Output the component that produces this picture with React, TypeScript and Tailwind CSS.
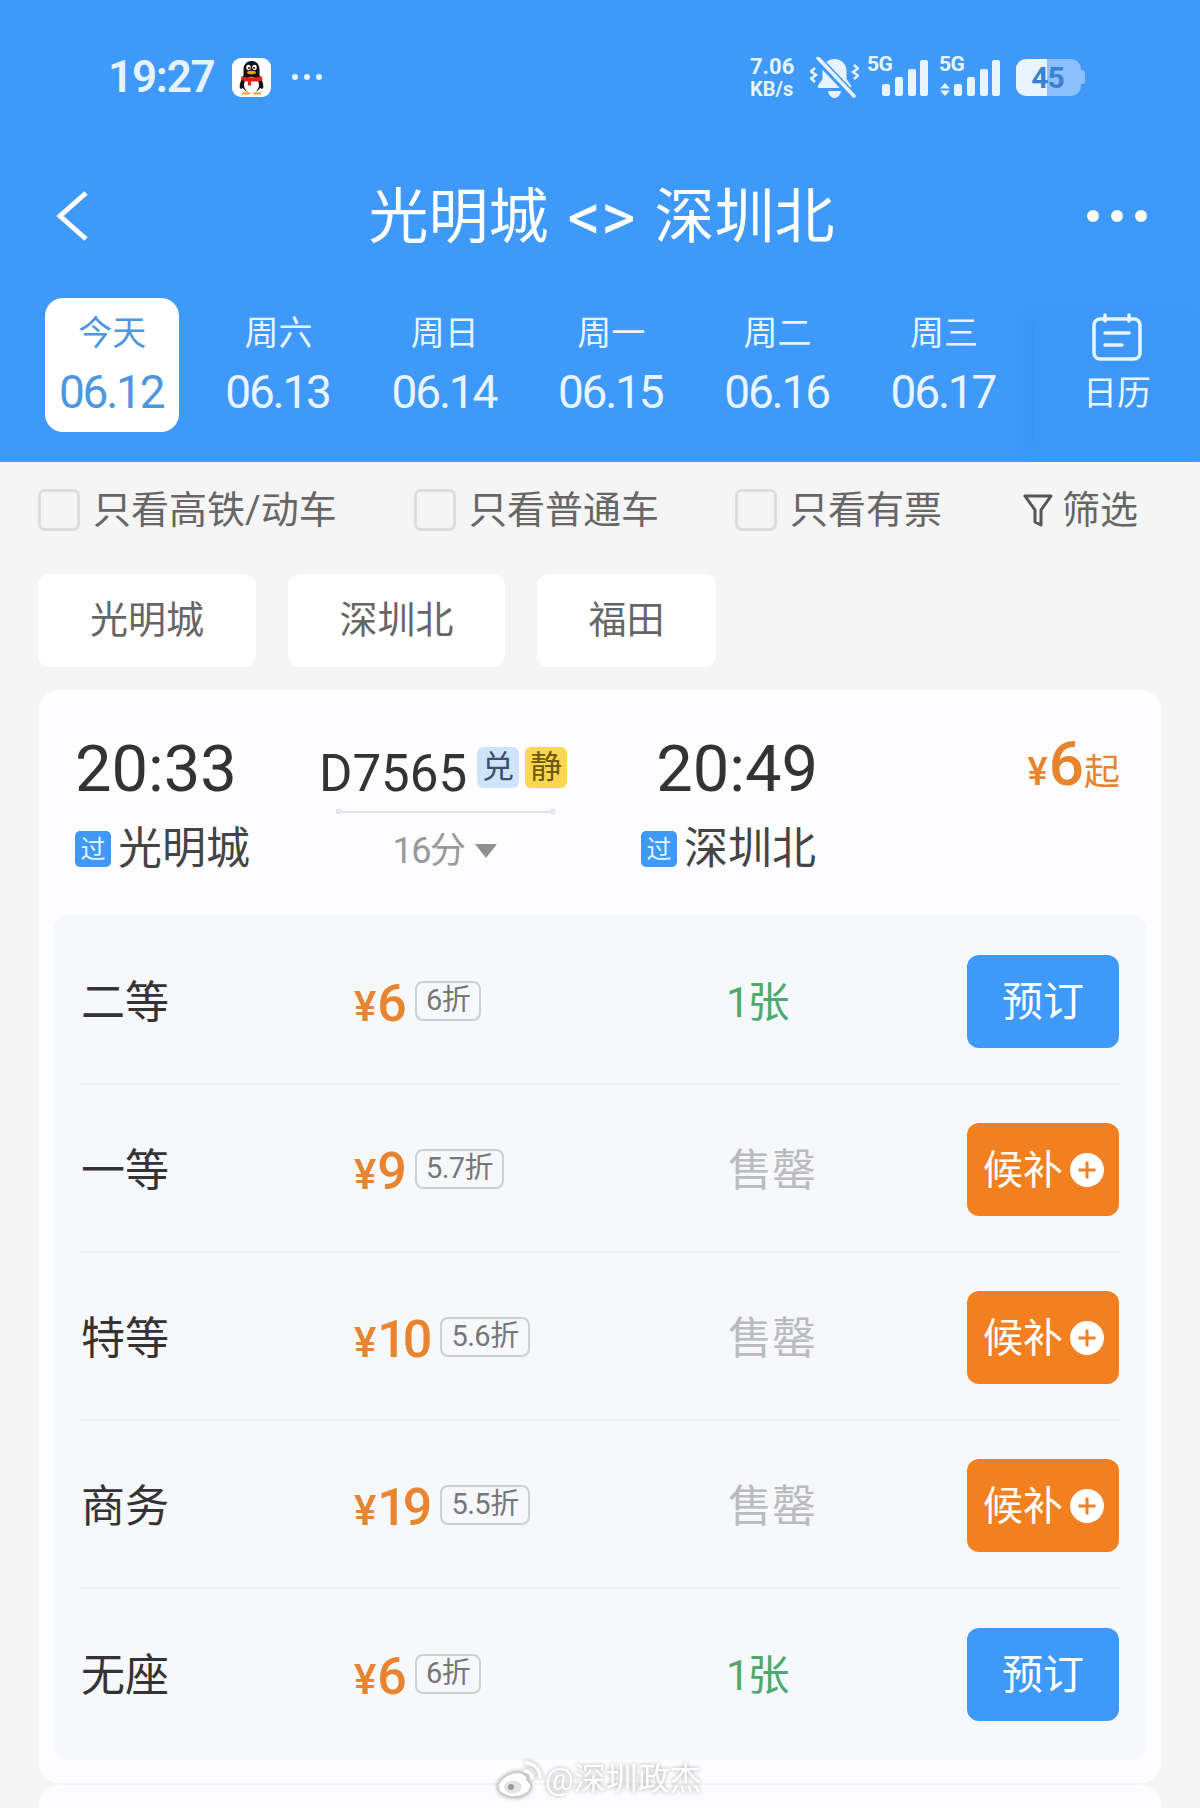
import React from "react";

const days = [
  { label: "今天", date: "06.12", active: true },
  { label: "周六", date: "06.13" },
  { label: "周日", date: "06.14" },
  { label: "周一", date: "06.15" },
  { label: "周二", date: "06.16" },
  { label: "周三", date: "06.17" },
];

const seats = [
  { name: "二等", price: "6", off: "6折", left: "1张", ok: true },
  { name: "一等", price: "9", off: "5.7折", left: "售罄" },
  { name: "特等", price: "10", off: "5.6折", left: "售罄" },
  { name: "商务", price: "19", off: "5.5折", left: "售罄" },
  { name: "无座", price: "6", off: "6折", left: "1张", ok: true },
];

const QQIcon = () => (
  <svg width="39" height="39" viewBox="0 0 39 39">
    <rect width="39" height="39" rx="9" fill="#fff" />
    <path d="M19.5 3c-5.4 0-8 4-8 9v5l-3 7c-1 3-1.400 6 .5 7l2-1c1.500 3 4.500 4.500 8.500 4.500s7-1.500 8.500-4.500l2 1c1.900-1 1.500-4 .5-7l-3-7v-5c0-5-2.600-9-8-9z" fill="#111" />
    <ellipse cx="19.500" cy="27" rx="7.500" ry="8" fill="#fff" />
    <ellipse cx="16.500" cy="9.500" rx="2.200" ry="2.800" fill="#fff" />
    <ellipse cx="22.500" cy="9.500" rx="2.200" ry="2.800" fill="#fff" />
    <circle cx="17" cy="10" r="1" fill="#111" />
    <circle cx="22" cy="10" r="1" fill="#111" />
    <ellipse cx="19.500" cy="14.500" rx="4.500" ry="1.800" fill="#f0a01e" />
    <path d="M9.500 18c6 2 14 2 20 0l1 4c-2 1-4 1.500-5.500 1.600H19v4h-3v-4c-2.500-.2-5-.8-7-1.600z" fill="#e0201c" />
    <path d="M11 35.500h6M22 35.500h6" stroke="#f0a01e" strokeWidth="2" strokeLinecap="round" />
  </svg>
);

const SilentBell = () => (
  <svg width="49" height="41" viewBox="0 0 49 41" fill="none">
    <path d="M24.500 2c-7 0-12 5-12 12v8l-4.500 6.500c-.6 1.500 0 2.500 1.400 2.500h30.200c1.400 0 2-1 1.400-2.500L36.500 22v-8c0-7-5-12-12-12z" fill="#e8f4ff" />
    <path d="M18 34h13c-.6 4-3.400 7-6.500 7s-5.900-3-6.500-7z" fill="#e8f4ff" />
    <path d="M7 1l36 38" stroke="#3e99fb" strokeWidth="8" />
    <path d="M8 1l36 38" stroke="#e8f4ff" strokeWidth="3.600" strokeLinecap="round" />
    <path d="M5 11L1 14.500l5 3.500-5 3.500L5 25M44 8l4 3.500-5 3.500 5 3.500-4 3.500" stroke="#e8f4ff" strokeWidth="2.400" />
  </svg>
);

const Signal = ({ arrows }: { arrows?: boolean }) => (
  <div className="relative w-[61px] h-[38px]">
    <span className="absolute left-0 top-[-4px] text-[21px] leading-[21px] font-bold tracking-[-0.5px] text-[#e8f4ff]">5G</span>
    <svg width="61" height="38" viewBox="0 0 61 38" className="absolute left-0 top-0" fill="#e8f4ff">
      {arrows && <path d="M6 25l5 5.500H1zM6 38l5-5.500H1z" />}
      <rect x="15" y="26" width="8" height="12" rx="2" />
      <rect x="28" y="19" width="8" height="19" rx="2" />
      <rect x="41" y="11" width="8" height="27" rx="2" />
      <rect x="53" y="2" width="8" height="36" rx="2" />
    </svg>
  </div>
);

const Battery = () => (
  <div className="flex items-center">
    <div className="relative w-[65px] h-[37px] rounded-[10px] overflow-hidden bg-[#8cc0fc]">
      <div className="w-[31px] h-full bg-[#e8f4ff]" />
      <span className="absolute inset-0 flex items-center justify-center pr-[2px] text-[30px] font-bold text-[#3a80d4] tracking-[-1px]">45</span>
    </div>
    <div className="w-[4px] h-[14px] rounded-r-[3px] bg-[#8cc0fc]" />
  </div>
);

const CheckItem = ({ text, width }: { text: string; width: string }) => (
  <div className={`flex items-center ${width}`}>
    <div className="w-[42px] h-[42px] rounded-[7px] border-[3px] border-[#dedede] bg-[#f5f5f5]" />
    <span className="ml-[13px] text-[38px] leading-[42px] text-[#666]">{text}</span>
  </div>
);

const PassTag = () => (
  <span className="flex items-center justify-center w-[36px] h-[36px] rounded-[5px] bg-[#3e99fb] text-[25px] leading-none text-[#e8f4ff]">过</span>
);

const SeatRow = ({ seat, last }: { seat: (typeof seats)[number]; last?: boolean }) => (
  <div className={`flex items-center h-[168px] ml-[26px] mr-[27px] pt-[3px] ${last ? "" : "border-b-2 border-[#edeef2]"}`}>
    <div className="w-[274px] pl-[1px] mt-[2px] text-[44px] text-[#333]">{seat.name}</div>
    <div className="w-[374px] flex items-center mt-[4px]">
      <span className="text-[42px] leading-none font-medium text-[#e8832f] mt-[6px]">¥</span>
      <span className="ml-[1px] text-[52px] leading-none font-medium text-[#e8832f] tracking-[-4px]">{seat.price}</span>
      <span className="ml-[12px] h-[40px] px-[9px] flex items-center rounded-[8px] border-2 border-[#cfd0d4] text-[29px] leading-none tracking-[-0.5px] text-[#777] mb-[6px]">
        {seat.off}
      </span>
    </div>
    <div className={`flex-1 mt-[2px] ${seat.ok ? "text-[42px] text-[#4caa6e] tracking-[-2px] -ml-[2px]" : "text-[44px] text-[#bbbbbd]"}`}>{seat.left}</div>
    {seat.ok ? (
      <div className="w-[152px] h-[93px] rounded-[12px] bg-[#3e99fb] flex items-center justify-center pt-[2px] text-[41px] text-white">预订</div>
    ) : (
      <div className="w-[152px] h-[93px] rounded-[12px] bg-[#f27f20] flex items-center pl-[16px] text-[40px] text-white">
        <span className="mt-[2px]">候补</span>
        <svg width="34" height="34" viewBox="0 0 34 34" className="ml-[7px]">
          <circle cx="17" cy="17" r="17" fill="#fff" />
          <path d="M17 8.500v17M8.500 17h17" stroke="#f27f20" strokeWidth="3" />
        </svg>
      </div>
    )}
  </div>
);

export default function App() {
  return (
    <div className="relative w-[1200px] h-[1808px] overflow-hidden bg-[#f5f5f5] [font-family:Roboto,'Noto_Sans_CJK_SC',sans-serif]">
      <div className="h-[462px] bg-[#3e99fb]">
        <div className="flex items-center justify-between h-[118px] pt-[36px] pl-[108px] pr-[115px]">
          <div className="flex items-center">
            <span className="w-[124px] text-[44px] leading-none font-semibold text-[#e6f3ff] tracking-[-1.200px]">19:27</span>
            <QQIcon />
            <div className="flex gap-[6px] ml-[21px]">
              <span className="w-[6px] h-[6px] rounded-full bg-[#e6f3ff]" />
              <span className="w-[6px] h-[6px] rounded-full bg-[#e6f3ff]" />
              <span className="w-[6px] h-[6px] rounded-full bg-[#e6f3ff]" />
            </div>
          </div>
          <div className="flex items-center">
            <div className="w-[60px] font-bold text-[#e8f4ff]">
              <div className="text-[22px] leading-[24px]">7.06</div>
              <div className="text-[20px] leading-[21px]">KB/s</div>
            </div>
            <SilentBell />
            <div className="flex gap-[11px] ml-[8px] mr-[16px]">
              <Signal />
              <Signal arrows />
            </div>
            <Battery />
          </div>
        </div>

        <div className="grid grid-cols-[1fr_auto_1fr] items-center h-[180px] pt-[16px] pl-[56px] pr-[53px]">
          <svg width="32" height="50" viewBox="0 0 32 50" fill="none">
            <path d="M30 2L4 25l26 23" stroke="#fff" strokeWidth="5" />
          </svg>
          <div className="flex items-center gap-[19px] text-[60px] leading-[70px] text-white mt-[4px]">
            <span>光明城</span>
            <span className="text-[66px] leading-[70px]">&lt;&gt;</span>
            <span>深圳北</span>
          </div>
          <div className="flex justify-end gap-[12px]">
            <span className="w-[12px] h-[12px] rounded-full bg-white" />
            <span className="w-[12px] h-[12px] rounded-full bg-white" />
            <span className="w-[12px] h-[12px] rounded-full bg-white" />
          </div>
        </div>

        <div className="flex items-start h-[133px] pl-[29px]">
          {days.map((d) => (
            <div key={d.date} className="w-[166.4px] flex justify-center">
              <div
                className={`w-[134px] h-[134px] rounded-[18px] flex flex-col items-center pt-[14px] ${
                  d.active ? "bg-white text-[#4e97e0]" : "text-[#e8f4ff]"
                }`}
              >
                <div className="text-[34px] leading-[42px]">{d.label}</div>
                <div className="mt-[10px] pr-[2px] text-[46px] leading-[56px] tracking-[-2.200px]">{d.date}</div>
              </div>
            </div>
          ))}
          <div className="w-[166px] h-[137px] mt-[15px] ml-[7px] flex flex-col items-center text-[#e8f4ff] bg-[#3d97f9] shadow-[-8px_0_12px_rgba(40,100,180,0.08)]">
            <svg width="50" height="48" viewBox="0 0 50 48" fill="none" stroke="#e8f4ff" strokeWidth="3.500" strokeLinecap="round">
              <rect x="2" y="6" width="46" height="40" rx="6" />
              <path d="M13 2v6M37 2v6M13 20h24M13 32h17" />
            </svg>
            <div className="mt-[13px] text-[34px] leading-[38px]">日历</div>
          </div>
        </div>
      </div>

      <div className="flex items-start h-[112px] pt-[27px] pl-[38px]">
        <CheckItem text="只看高铁/动车" width="w-[376px]" />
        <CheckItem text="只看普通车" width="w-[321px]" />
        <CheckItem text="只看有票" width="w-[288px]" />
        <div className="flex items-center h-[42px]">
          <svg width="30" height="34" viewBox="0 0 30 34" fill="none" stroke="#555" strokeWidth="3" strokeLinejoin="round">
            <path d="M2 3h26L18 17v15l-6-3V17z" />
          </svg>
          <span className="ml-[9px] text-[38px] leading-[42px] text-[#666]">筛选</span>
        </div>
      </div>

      <div className="flex gap-[32px] pl-[38px]">
        <div className="w-[218px] h-[93px] rounded-[12px] bg-white flex items-center justify-center text-[38px] text-[#666]">光明城</div>
        <div className="w-[217px] h-[93px] rounded-[12px] bg-white flex items-center justify-center text-[38px] text-[#666]">深圳北</div>
        <div className="w-[179px] h-[93px] rounded-[12px] bg-white flex items-center justify-center text-[38px] text-[#666]">福田</div>
      </div>

      <div className="ml-[39px] mt-[23px] w-[1122px] h-[1093px] rounded-[20px] bg-[#fdfdff]">
        <div className="flex h-[225px] pl-[36px] pr-[41px]">
          <div className="w-[240px] pt-[44px]">
            <div className="text-[65px] leading-[70px] text-[#333]">20:33</div>
            <div className="flex items-center mt-[23px] h-[44px]">
              <PassTag />
              <span className="ml-[7px] text-[44px] leading-none text-[#444]">光明城</span>
            </div>
          </div>

          <div className="w-[260px] flex flex-col items-center">
            <div className="flex items-center mt-[58px] h-[44px]">
              <span className="text-[51px] leading-none text-[#333] mt-[6px] -ml-[4px]">D7565</span>
              <span className="ml-[10px] w-[42px] h-[41px] mb-[6px] rounded-[6px] bg-[#cfe3fb] flex items-center justify-center text-[32px] text-[#3c5068]">兑</span>
              <span className="ml-[6px] w-[42px] h-[41px] mb-[6px] rounded-[6px] bg-[#fcd84f] flex items-center justify-center text-[32px] text-[#6b5a10]">静</span>
            </div>
            <div className="flex items-center w-[219px] mt-[17px]">
              <span className="w-[5px] h-[5px] rounded-full border border-[#c8cad0]" />
              <span className="flex-1 h-[2px] bg-[#e0e2e8]" />
              <span className="w-[5px] h-[5px] rounded-full border border-[#c8cad0]" />
            </div>
            <div className="flex items-center mt-[15px] h-[44px]">
              <span className="text-[36px] leading-none text-[#999] tracking-[-1.500px]">16分</span>
              <svg width="22" height="14" viewBox="0 0 22 14" className="ml-[11px]">
                <path d="M0 0h22L11 14z" fill="#909090" />
              </svg>
            </div>
          </div>

          <div className="ml-[66px] w-[175px] pt-[44px] flex flex-col items-end">
            <div className="text-[65px] leading-[70px] text-[#333] -mr-[2px]">20:49</div>
            <div className="flex items-center mt-[23px] h-[44px]">
              <PassTag />
              <span className="ml-[7px] text-[44px] leading-none text-[#444]">深圳北</span>
            </div>
          </div>

          <div className="flex-1 flex justify-end items-baseline pt-[43px] text-[#e8842e] leading-none">
            <span className="text-[38px] font-medium">¥</span>
            <span className="ml-[1px] text-[62px] font-medium">6</span>
            <span className="text-[36px]">起</span>
          </div>
        </div>

        <div className="mx-[15px] h-[845px] rounded-[14px] bg-[#f7f8fb] pt-[2px]">
          {seats.map((s, i) => (
            <SeatRow key={s.name} seat={s} last={i === seats.length - 1} />
          ))}
        </div>
      </div>

      <div className="ml-[39px] mt-[2px] w-[1122px] h-[100px] rounded-[20px] bg-[#fcfcfe]" />

      <div className="absolute left-[496px] top-[1760px] flex items-center [filter:drop-shadow(0_0_2px_rgba(0,0,0,0.35))]">
        <svg width="46" height="38" viewBox="0 0 46 38" fill="none">
          <path d="M20 12C10 14 2 21 2 27c0 6 8 10 16 10 9 0 17-5 17-11 0-4-4-5-4-6 1-4-3-7-11-8z" fill="#fff" stroke="#c9c9c9" strokeWidth="1.500" />
          <ellipse cx="17" cy="27" rx="9" ry="6.500" fill="#e4e4e4" />
          <circle cx="15" cy="27" r="3" fill="#999" />
          <path d="M29 11a7 7 0 0 1 7 7M30 3a14 14 0 0 1 14 14" stroke="#fff" strokeWidth="3.500" strokeLinecap="round" />
        </svg>
        <span className="ml-[3px] text-[32px] leading-none text-white">@深圳政杰</span>
      </div>
    </div>
  );
}
